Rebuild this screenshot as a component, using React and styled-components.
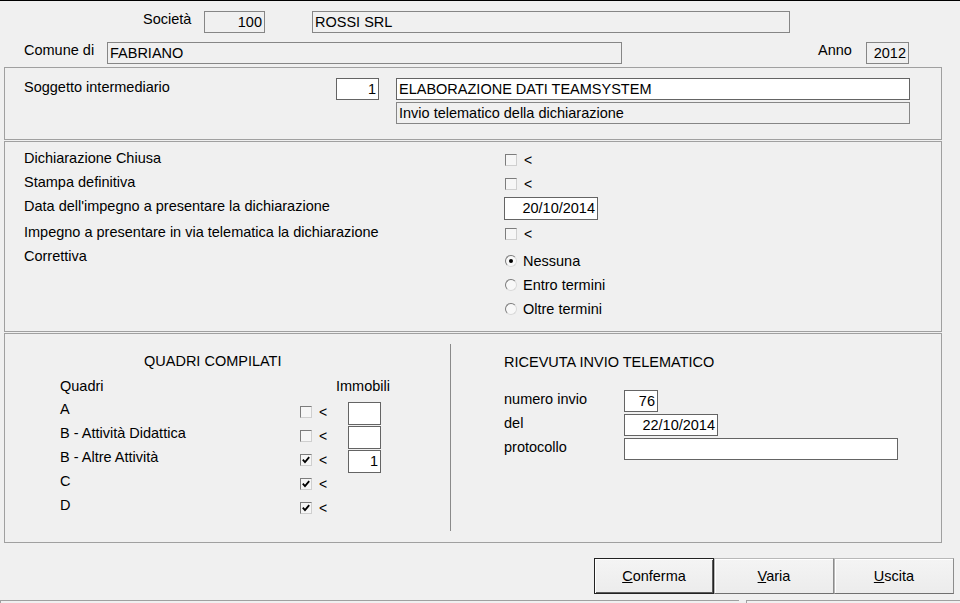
import React from "react"
import styled, { createGlobalStyle } from "styled-components"

const GlobalStyle = createGlobalStyle`
  html, body {
    margin: 0;
    padding: 0;
    overflow: hidden;
    background: #f0f0f0;
  }
  body {
    font-family: "Liberation Sans", Arial, sans-serif;
    font-size: 14.5px;
    color: #000;
  }
`

const Window = styled.div`
  width: 960px;
  height: 603px;
  box-sizing: border-box;
  border-top: 1px solid #000;
  overflow: hidden;
`

const Row = styled.div`
  display: flex;
  align-items: flex-start;
  margin-top: ${p => p.$mt || 0}px;
  padding-left: ${p => p.$pl || 0}px;
  height: ${p => (p.$h ? `${p.$h}px` : "auto")};
`

const Label = styled.div`
  flex: none;
  width: ${p => (p.$w ? `${p.$w}px` : "auto")};
  margin-left: ${p => p.$ml || 0}px;
  margin-top: ${p => p.$mt || 0}px;
  line-height: 18px;
  white-space: nowrap;
`

const Field = styled.div`
  flex: none;
  box-sizing: border-box;
  width: ${p => p.$w}px;
  height: ${p => p.$h || 22}px;
  margin-left: ${p => p.$ml || 0}px;
  margin-top: ${p => p.$mt || 0}px;
  border: 1px solid ${p => (p.$white ? "#646464" : "#868686")};
  background: ${p => (p.$white ? "#fff" : "#f0f0f0")};
  padding: 0 2px;
  line-height: ${p => (p.$h || 22) - 2}px;
  text-align: ${p => (p.$right ? "right" : "left")};
  white-space: nowrap;
  overflow: hidden;
`

const Stack = styled.div`
  display: flex;
  flex-direction: column;
  gap: 2px;
  margin-left: ${p => p.$ml || 0}px;
`

const Panel = styled.div`
  box-sizing: border-box;
  width: 938px;
  height: ${p => p.$h}px;
  margin: ${p => p.$mt || 0}px 0 0 4px;
  border: 1px solid #a0a0a0;
  padding: ${p => p.$pt || 0}px 0 0 ${p => p.$pl || 0}px;
`

const SplitPanel = styled(Panel)`
  display: flex;
  align-items: flex-start;
`

const FormGrid = styled.div`
  display: grid;
  grid-template-columns: 480px 1fr;
  grid-auto-rows: minmax(24px, auto);
`

const FormLabel = styled.div`
  line-height: 24px;
  white-space: nowrap;
`

const Ctrl = styled.div`
  display: flex;
  flex-direction: column;
  align-items: flex-start;
  padding-top: ${p => p.$pt || 0}px;
`

const CheckLine = styled.div`
  display: flex;
  align-items: center;
  gap: 7px;
  height: 12px;
  margin-left: ${p => p.$ml || 0}px;
  margin-top: ${p => p.$mt || 0}px;
`

const Box = styled.span`
  flex: none;
  width: 12px;
  height: 12px;
  box-sizing: border-box;
  border: 1px solid;
  border-color: #7c7c7c #cfcfcf #cfcfcf #7c7c7c;
  background: #f6f6f6;
  display: inline-flex;
  align-items: center;
  justify-content: center;
`

const Lt = styled.span`
  line-height: 12px;
  font-size: 14px;
`

const Check = ({ on, ml, mt }) => (
  <CheckLine $ml={ml} $mt={mt}>
    <Box>
      {on && (
        <svg width="8" height="8" viewBox="0 0 8 8">
          <path d="M0.8 3.6 L3 6.2 L7.2 1.2" fill="none" stroke="#000" strokeWidth="1.8" />
        </svg>
      )}
    </Box>
    <Lt>&lt;</Lt>
  </CheckLine>
)

const RadioList = styled.div`
  display: flex;
  flex-direction: column;
  padding-top: 5px;
  margin-left: 1px;
`

const RadioRow = styled.div`
  display: flex;
  align-items: center;
  gap: 6px;
  height: 24px;
`

const RadioDot = styled.span`
  flex: none;
  width: 12px;
  height: 12px;
  box-sizing: border-box;
  border-radius: 50%;
  border: 1px solid;
  border-color: #7c7c7c #dadada #dadada #7c7c7c;
  background: #f8f8f8;
  display: inline-flex;
  align-items: center;
  justify-content: center;

  &::after {
    content: "";
    width: 4px;
    height: 4px;
    border-radius: 50%;
    background: ${p => (p.$on ? "#000" : "transparent")};
  }
`

const QuadriCol = styled.div`
  flex: none;
  width: 445px;
  box-sizing: border-box;
  padding: 18px 0 0 55px;
`

const Title = styled.div`
  line-height: 18px;
  margin-left: ${p => p.$ml || 0}px;
  white-space: nowrap;
`

const QRow = styled.div`
  display: grid;
  grid-template-columns: 240px 48px 33px;
  align-items: start;
  height: ${p => p.$h || 24}px;
  margin-top: ${p => p.$mt || 0}px;
`

const QLabel = styled.div`
  line-height: 18px;
  white-space: nowrap;
`

const Divider = styled.div`
  flex: none;
  width: 1px;
  height: 187px;
  margin-top: 10px;
  background: #8a8a8a;
`

const RicevutaCol = styled.div`
  flex: 1;
  padding: 19px 0 0 53px;
`

const Fields = styled.div`
  margin-top: 19px;
`

const ButtonBar = styled.div`
  display: flex;
  margin-top: 15px;
  padding-left: 594px;
`

const Button = styled.button`
  flex: none;
  width: 120px;
  height: 36px;
  box-sizing: border-box;
  padding: 0;
  font: 14.5px "Liberation Sans", Arial, sans-serif;
  color: #000;
  background: linear-gradient(#f4f4f4, #ececec);
  border: 1px solid;
  border-color: ${p => (p.$default ? "#222" : "#b8b8b8 #8c8c8c #707070 #b8b8b8")};
  box-shadow: ${p =>
    p.$default
      ? "inset 1px 1px 0 #fff, inset -1px -1px 0 #5a5a5a"
      : "inset 1px 1px 0 #fff"};
`

const StatusBar = styled.div`
  display: flex;
  gap: 7px;
  margin-top: 6px;
`

const StatusCell = styled.div`
  height: 20px;
  width: ${p => (p.$w ? `${p.$w}px` : "auto")};
  flex: ${p => (p.$w ? "none" : "1")};
  border-top: 1px solid #a0a0a0;
  border-left: 1px solid #a0a0a0;
`

const quadri = [
  { name: "A", on: false, box: "" },
  { name: "B - Attività Didattica", on: false, box: "" },
  { name: "B - Altre Attività", on: true, box: "1" },
  { name: "C", on: true },
  { name: "D", on: true }
]

export default function App() {
  return (
    <Window>
      <GlobalStyle />

      <Row $mt={10} $pl={143}>
        <Label $w={61} $mt={-1}>Società</Label>
        <Field $w={61} $right>100</Field>
        <Field $w={478} $ml={47}>ROSSI SRL</Field>
      </Row>

      <Row $mt={9} $pl={24}>
        <Label $w={83} $mt={-1}>Comune di</Label>
        <Field $w={515}>FABRIANO</Field>
        <Label $w={48} $ml={196} $mt={-1}>Anno</Label>
        <Field $w={43} $right>2012</Field>
      </Row>

      <Panel $mt={3} $h={73} $pt={10} $pl={19}>
        <Row>
          <Label $w={312}>Soggetto intermediario</Label>
          <Field $w={43} $white $right>1</Field>
          <Stack $ml={17}>
            <Field $w={514} $white>ELABORAZIONE DATI TEAMSYSTEM</Field>
            <Field $w={514}>Invio telematico della dichiarazione</Field>
          </Stack>
        </Row>
      </Panel>

      <Panel $mt={1} $h={191} $pt={4} $pl={19}>
        <FormGrid>
          <FormLabel>Dichiarazione Chiusa</FormLabel>
          <Ctrl $pt={8}><Check ml={1} /></Ctrl>
          <FormLabel>Stampa definitiva</FormLabel>
          <Ctrl $pt={8}><Check ml={1} /></Ctrl>
          <FormLabel>Data dell'impegno a presentare la dichiarazione</FormLabel>
          <Ctrl $pt={3}><Field $w={94} $h={23} $white $right>20/10/2014</Field></Ctrl>
          <FormLabel>Impegno a presentare in via telematica la dichiarazione</FormLabel>
          <Ctrl $pt={8}><Check ml={1} /></Ctrl>
          <FormLabel>Correttiva</FormLabel>
          <RadioList>
            <RadioRow><RadioDot $on />Nessuna</RadioRow>
            <RadioRow><RadioDot />Entro termini</RadioRow>
            <RadioRow><RadioDot />Oltre termini</RadioRow>
          </RadioList>
        </FormGrid>
      </Panel>

      <SplitPanel $mt={1} $h={210}>
        <QuadriCol>
          <Title $ml={84}>QUADRI COMPILATI</Title>
          <QRow $mt={7} $h={23}>
            <QLabel>Quadri</QLabel>
            <QLabel style={{ gridColumn: "2 / 4", paddingLeft: 36 }}>Immobili</QLabel>
          </QRow>
          {quadri.map(q => (
            <QRow key={q.name}>
              <QLabel>{q.name}</QLabel>
              <Check on={q.on} mt={6} />
              {q.box !== undefined && (
                <Field $w={33} $h={23} $mt={2} $white $right>{q.box}</Field>
              )}
            </QRow>
          ))}
        </QuadriCol>
        <Divider />
        <RicevutaCol>
          <Title>RICEVUTA INVIO TELEMATICO</Title>
          <Fields>
            <Row $h={24}>
              <Label $w={120}>numero invio</Label>
              <Field $w={34} $white $right>76</Field>
            </Row>
            <Row $h={24}>
              <Label $w={120}>del</Label>
              <Field $w={94} $white $right>22/10/2014</Field>
            </Row>
            <Row $h={24}>
              <Label $w={120}>protocollo</Label>
              <Field $w={274} $white />
            </Row>
          </Fields>
        </RicevutaCol>
      </SplitPanel>

      <ButtonBar>
        <Button $default><u>C</u>onferma</Button>
        <Button><u>V</u>aria</Button>
        <Button><u>U</u>scita</Button>
      </ButtonBar>

      <StatusBar>
        <StatusCell $w={738} />
        <StatusCell />
      </StatusBar>
    </Window>
  )
}
